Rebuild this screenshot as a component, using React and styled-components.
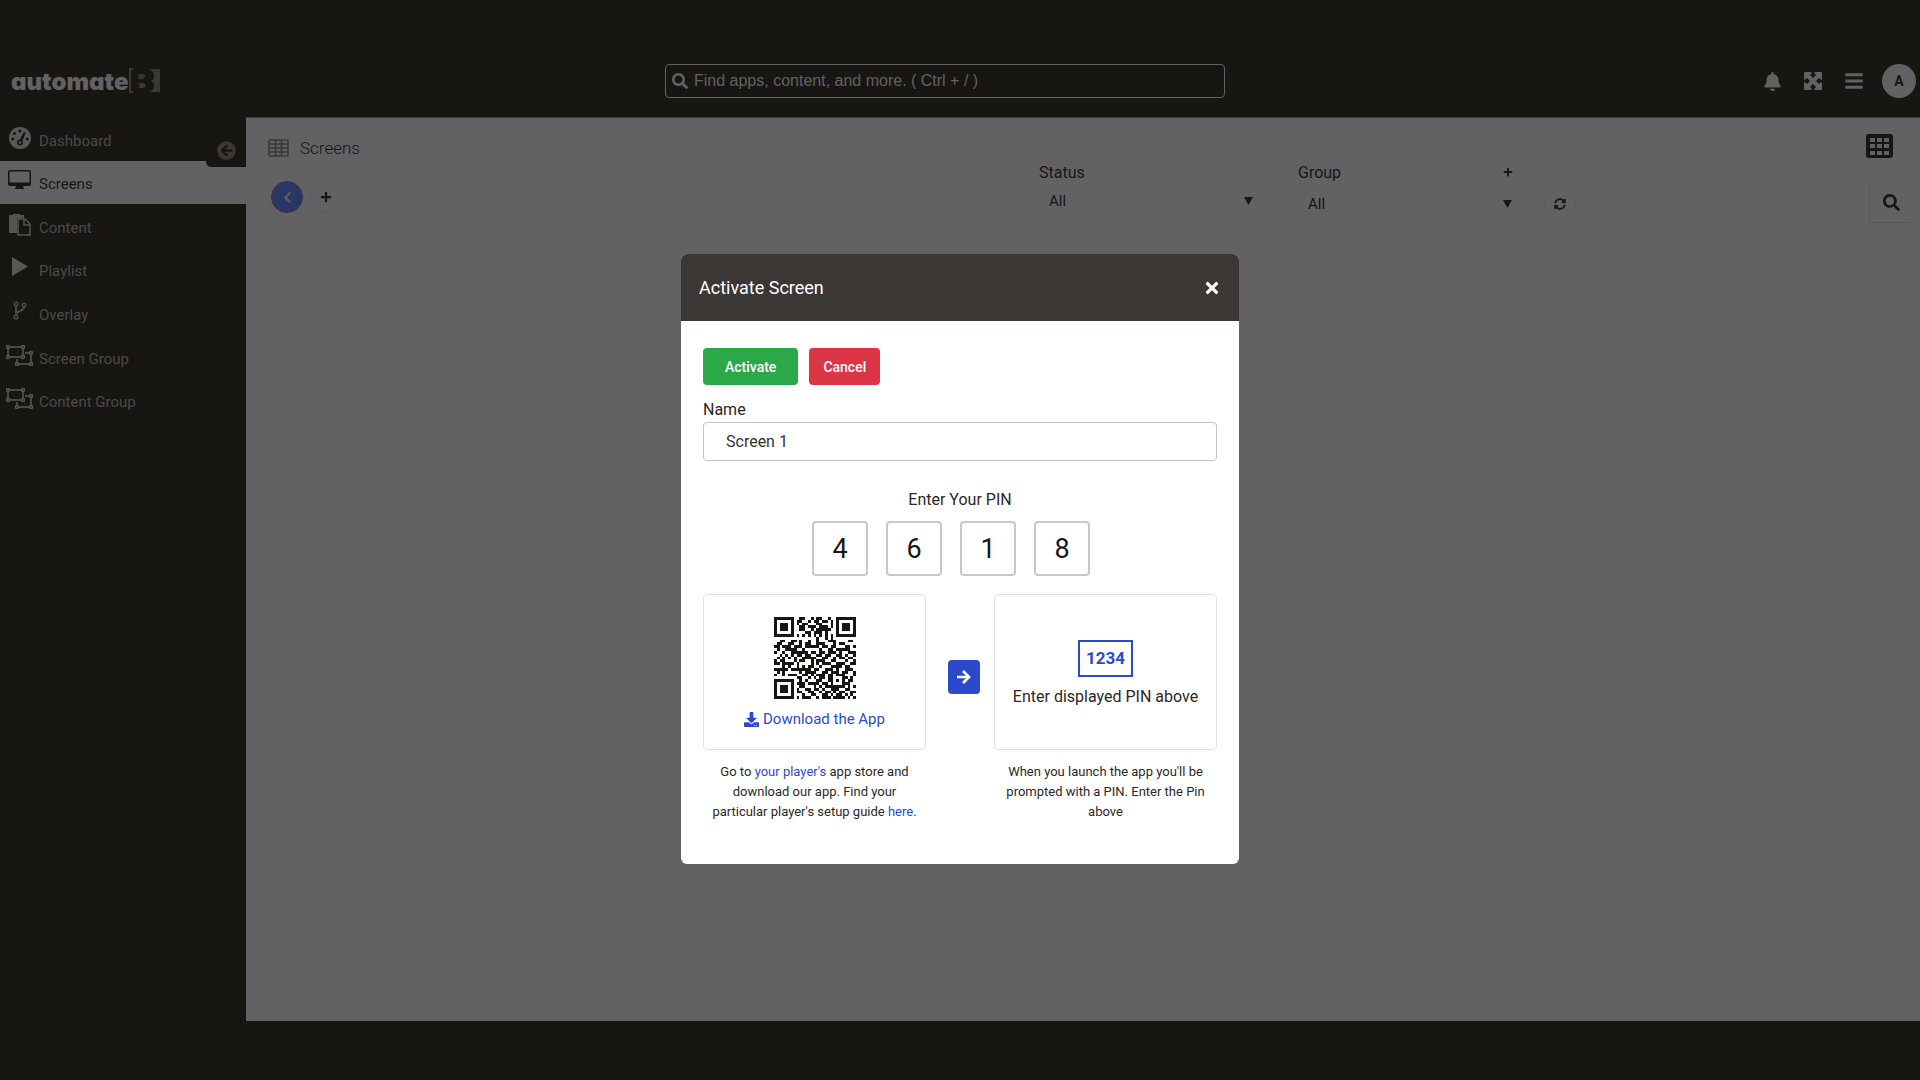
import React, { useState } from 'react';
import styled, { createGlobalStyle } from 'styled-components';
import {
  FaArrowCircleLeft, FaBars, FaBell, FaChevronLeft, FaDownload,
  FaPlus, FaSearch, FaSyncAlt, FaTimes,
} from 'react-icons/fa';

const dark = '#181613';
const grey = '#626163';
const brown = '#3b3734';
const muted = '#4b4948';
const blue = '#2b4acb';

const GlobalStyle = createGlobalStyle`
  * {
    box-sizing: border-box;
  }

  body {
    margin: 0;
    background: ${dark};
    color: ${dark};
    font-family: Roboto, "Liberation Sans", sans-serif;
    font-size: 16px;
  }

  button, input, select {
    font-family: inherit;
  }
`;

const Page = styled.div`
  min-height: 100vh;
  display: grid;
  grid-template-rows: auto 1fr;
  padding-bottom: 59px;
`;

const Header = styled.header`
  height: 117px;
  padding: 45px 4px 0 11px;
  display: grid;
  grid-template-columns: 654fr 560fr 691fr;
  align-items: center;
`;

const Logo = styled.a`
  display: flex;
  align-items: center;
  color: ${grey};
  font-family: Inter, Lato, sans-serif;
  font-feature-settings: "cv11";
  font-size: 24px;
  font-weight: 900;
  text-decoration: none;
`;

const SearchBar = styled.label`
  height: 34px;
  padding: 0 6px;
  display: flex;
  align-items: center;
  gap: 6px;
  border: 1px solid ${grey};
  border-radius: 4px;
  color: ${grey};
`;

const SearchInput = styled.input`
  flex: 1;
  padding: 0;
  border: 0;
  outline: 0;
  background: transparent;
  color: ${grey};
  font-family: "Liberation Sans", Arial, sans-serif;
  font-size: 16px;

  &::placeholder {
    color: ${grey};
    opacity: 1;
  }
`;

const HeaderTools = styled.div`
  display: flex;
  justify-content: flex-end;
  align-items: center;
  gap: 22px;
`;

const IconButton = styled.button`
  padding: 0;
  display: flex;
  align-items: center;
  justify-content: center;
  border: 0;
  background: transparent;
  color: ${(props) => props.$color || dark};
  cursor: pointer;
`;

const Avatar = styled.button`
  width: 34px;
  height: 34px;
  margin-left: -4px;
  padding: 0;
  border: 0;
  border-radius: 50%;
  background: ${grey};
  color: ${dark};
  font-size: 14px;
  font-weight: 700;
`;

const Content = styled.div`
  display: grid;
  grid-template-columns: 246px 1fr;
`;

const Sidebar = styled.aside`
  position: relative;
`;

const Nav = styled.nav`
  height: 305px;
  display: grid;
  grid-auto-rows: 1fr;
`;

const NavItem = styled.a`
  padding: 4px 0 0 6px;
  display: flex;
  align-items: center;
  gap: 6px;
  background: ${(props) => (props.$active ? grey : 'transparent')};
  color: ${(props) => (props.$active ? dark : muted)};
  font-size: 15px;
  text-decoration: none;
`;

const NavIcon = styled.span`
  width: 27px;
  height: 28px;
  display: flex;
  align-items: flex-start;
  justify-content: center;
`;

const CollapseTab = styled.button`
  position: absolute;
  top: 17px;
  right: 0;
  width: 40px;
  height: 33px;
  padding: 0;
  display: flex;
  align-items: center;
  justify-content: center;
  border: 0;
  border-radius: 0 0 0 5px;
  background: ${dark};
  color: ${brown};
`;

const Main = styled.main`
  padding: 0 8px 0 22px;
  display: grid;
  grid-template-columns: 771fr 259fr 246fr 32fr 336fr;
  align-items: start;
  border-top: 1px solid ${brown};
  background: ${grey};
`;

const TitleBlock = styled.div`
  padding-top: 16px;
`;

const Title = styled.h1`
  height: 28px;
  margin: 0 0 19px;
  display: flex;
  align-items: center;
  gap: 11px;
  font-size: 17px;
  font-weight: 300;
`;

const Actions = styled.div`
  padding-left: 3px;
  display: flex;
  gap: 7px;
`;

const RoundButton = styled(IconButton)`
  width: 32px;
  height: 32px;
  border: 1px ${(props) => (props.$filled ? 'solid' : 'dotted')} ${(props) => (props.$filled ? brown : '#5a595a')};
  border-radius: 50%;
  background: ${(props) => (props.$filled ? '#2b3566' : 'transparent')};
`;

const Filter = styled.div`
  padding-top: 42px;
  display: flex;
  flex-direction: column;
  gap: ${(props) => props.$gap};
`;

const FilterHead = styled.div`
  height: 24px;
  padding-right: 31px;
  display: flex;
  align-items: center;
  justify-content: space-between;
`;

const SelectRow = styled.div`
  height: 24px;
  padding: 0 ${(props) => props.$right} 0 10px;
  display: flex;
  align-items: center;
`;

const Select = styled.select`
  flex: 1;
  padding: 0;
  appearance: none;
  border: 0;
  outline: 0;
  background: transparent;
  color: ${dark};
  font-size: 15px;
`;

const Refresh = styled.div`
  padding-top: 70px;
`;

const ViewTools = styled.div`
  padding-top: 16px;
  display: flex;
  flex-direction: column;
  align-items: flex-end;
  gap: 24px;
`;

const GridButton = styled(IconButton)`
  margin-right: 19px;
`;

const FindButton = styled(IconButton)`
  width: 43px;
  height: 41px;
  border: 1px dotted #4f4d4d;
  border-width: 0 0 1px 1px;
  border-radius: 4px;
`;

const Overlay = styled.div`
  position: fixed;
  inset: 0;
  padding-top: 254px;
  display: flex;
  justify-content: center;
  align-items: flex-start;
`;

const Modal = styled.section`
  width: 558px;
  border-radius: 6px;
  overflow: hidden;
  background: #fff;
`;

const ModalHeader = styled.header`
  height: 67px;
  padding: 0 18px;
  display: flex;
  align-items: center;
  justify-content: space-between;
  background: ${brown};
  color: #fff;
`;

const ModalTitle = styled.h2`
  margin: 0;
  font-size: 18px;
  font-weight: 400;
`;

const ModalBody = styled.form`
  padding: 27px 22px 42px;
`;

const ButtonRow = styled.div`
  display: flex;
  gap: 11px;
`;

const Button = styled.button`
  height: 37px;
  padding: 0 ${(props) => props.$pad};
  border: 0;
  border-radius: 4px;
  background: ${(props) => props.$color};
  color: #fff;
  font-size: 14px;
  font-weight: 500;
`;

const Label = styled.label`
  margin-top: 13px;
  display: block;
  color: #2b2825;
  font-size: 16px;
  line-height: 24px;
`;

const NameInput = styled.input`
  width: 100%;
  height: 39px;
  padding: 0 22px;
  display: block;
  border: 1px solid #c4c4c4;
  border-radius: 4px;
  color: #35322f;
  font-size: 16px;
`;

const Pins = styled.fieldset`
  margin: 26px 0 18px;
  padding: 0;
  border: 0;
`;

const Legend = styled.legend`
  width: 100%;
  padding: 0;
  color: #2b2825;
  font-size: 16px;
  line-height: 26px;
  text-align: center;
`;

const PinRow = styled.div`
  padding: 8px 18px 0 0;
  display: flex;
  justify-content: center;
  gap: 18px;
`;

const PinInput = styled.input`
  width: 56px;
  height: 55px;
  padding: 0;
  border: 2px solid #c8c8c8;
  border-radius: 4px;
  color: ${dark};
  font-size: 27px;
  text-align: center;
`;

const Steps = styled.div`
  display: grid;
  grid-template-columns: 1fr 68px 1fr;
  row-gap: 12px;
`;

const Card = styled.div`
  height: 156px;
  padding-top: 4px;
  display: flex;
  flex-direction: column;
  align-items: center;
  justify-content: center;
  gap: 8px;
  border: 1px solid #e1e1e1;
  border-radius: 4px;
  color: #2b2825;
  line-height: 24px;
`;

const Link = styled.a`
  color: ${blue};
  text-decoration: none;
`;

const DownloadLink = styled(Link)`
  display: flex;
  align-items: center;
  gap: 4px;
  font-size: 15px;
`;

const NextButton = styled.button`
  width: 32px;
  height: 34px;
  margin: 10px 0 0 8px;
  padding: 0;
  display: flex;
  align-items: center;
  justify-content: center;
  align-self: center;
  justify-self: center;
  border: 0;
  border-radius: 4px;
  background: ${blue};
  color: #fff;
`;

const PinSample = styled.div`
  height: 37px;
  padding: 0 6px;
  border: 2px solid ${blue};
  color: ${blue};
  font-size: 17px;
  font-weight: 700;
  line-height: 33px;
`;

const Caption = styled.p`
  margin: 0;
  padding: 0 4px;
  grid-column: ${(props) => props.$column};
  color: #2b2825;
  font-size: 13px;
  line-height: 20px;
  text-align: center;
`;

const qrRows = [
  '11111110011001011001001111111',
  '10000010110010110110101000001',
  '10111010101100011000101011101',
  '10111010011011101110101011101',
  '10111010011001011111001011101',
  '10000010000110111010001000001',
  '11111110101010101010101111111',
  '00000000000000010010100000000',
  '00110011010010010001110000110',
  '01100110010110011100010110000',
  '11011101110111110110110001101',
  '01001111001000001001101111100',
  '10010011111101101101110100111',
  '00101010110110011011001101001',
  '01010101001111100110010110110',
  '10110001011001011100110001001',
  '11011110100001010111001110011',
  '00010100101011001000111101100',
  '11111011111110110011101001110',
  '01010000010111100110111011001',
  '10010111001101011101101110001',
  '00000000110010101101100011010',
  '11111110010100011001101010110',
  '10000010111011110110100011100',
  '10111010011000101011111110101',
  '10111010100110110100111001100',
  '10111010110011001011010110011',
  '10000010001001100110101101010',
  '11111110101110010111011110101',
];

function QrCode() {
  return (
    <svg width="82" height="82" viewBox="0 0 29 29" shapeRendering="crispEdges" role="img" aria-label="App download code">
      {qrRows.map((row, y) => row.split('').map((cell, x) => (
        cell === '1' ? <rect key={`${x}-${y}`} x={x} y={y} width="1" height="1" fill={dark} /> : null
      )))}
    </svg>
  );
}

function LogoMark() {
  return (
    <svg width="32" height="26" viewBox="0 0 32 26" fill={brown}>
      <path d="M1 0h4v2H3v21h2v2H1z" />
      <path d="M10 6h5l3 2-3 2 1 1h-6l1-2zM10 15h6l2 3-3 2h-5l2-2z" />
      <path d="M21 1h11v23H21c3-1 5-3 5-6 0-2-1-4-3-5 2-1 3-3 3-5 0-4-2-6-5-7z" />
    </svg>
  );
}

function GaugeIcon() {
  return (
    <svg width="22" height="22" viewBox="0 0 22 22">
      <circle cx="11" cy="11" r="11" fill="#5a5857" />
      <g fill={dark}>
        <circle cx="11" cy="4" r="1.600" />
        <circle cx="5.500" cy="6.500" r="1.600" />
        <circle cx="3.800" cy="12" r="1.600" />
        <circle cx="18.200" cy="12" r="1.600" />
        <circle cx="11" cy="15.500" r="3" />
        <path d="M15 4.500l1.800 1-4 10-3-1z" />
      </g>
      <circle cx="11" cy="15.500" r="1.300" fill="#5a5857" />
    </svg>
  );
}

function MonitorIcon() {
  return (
    <svg width="23" height="20" viewBox="0 0 23 20" fill="currentColor">
      <path fillRule="evenodd" d="M2 0h19a2 2 0 0 1 2 2v12a2 2 0 0 1-2 2h-6l1 3H7l1-3H2a2 2 0 0 1-2-2V2a2 2 0 0 1 2-2zm-.5 1.500v11h20v-11z" />
    </svg>
  );
}

function PagesIcon() {
  return (
    <svg width="22" height="22" viewBox="0 0 22 22" fill="none" stroke="#565453" strokeWidth="1.500">
      <path d="M0 1h4V0h7v1h4v3H8v15H0z" fill="#565453" stroke="none" />
      <path d="M9 5h7l5 5v11H9zM15 5v6h6" />
    </svg>
  );
}

function PlayIcon() {
  return (
    <svg width="24" height="20" viewBox="0 0 24 20" fill="#5a5857">
      <path d="M4 0l16 9.500L4 19z" />
    </svg>
  );
}

function BranchIcon() {
  return (
    <svg width="14" height="20" viewBox="0 0 14 20" fill="none" stroke="currentColor" strokeWidth="1.500">
      <circle cx="3" cy="3" r="1.800" />
      <circle cx="11" cy="4" r="1.800" />
      <circle cx="3" cy="16" r="1.800" />
      <path d="M3 5v9M11 6c0 5-8 3-8 8" strokeWidth="2" />
    </svg>
  );
}

function GroupIcon() {
  const nodes = [[2, 2], [17, 2], [2, 12], [17, 12], [25, 8], [25, 19], [11, 19]];
  return (
    <svg width="27" height="21" viewBox="0 0 27 21" fill="none" stroke="#5a5857" strokeWidth="1.500">
      <path d="M2 2h15v10H2zM19 8h6v11H11v-5" />
      {nodes.map(([x, y]) => (
        <circle key={`${x}-${y}`} cx={x} cy={y} r="1.500" fill={dark} />
      ))}
    </svg>
  );
}

function TableIcon() {
  return (
    <svg width="21" height="18" viewBox="0 0 21 18" fill="none" stroke={brown} strokeWidth="1.500">
      <rect x="1" y="1" width="19" height="16" rx="1" />
      <path d="M1 5h19M1 9h19M1 13h19M7.500 1v16M13.500 1v16" />
    </svg>
  );
}

function TilesIcon() {
  return (
    <svg width="27" height="24" viewBox="0 0 27 24">
      <rect width="27" height="24" rx="3" fill={dark} />
      {[4, 11, 18].map((x) => [4, 10, 17].map((y) => (
        <rect key={`${x}-${y}`} x={x} y={y} width="5" height="4" fill={grey} />
      )))}
    </svg>
  );
}

function ExpandIcon() {
  return (
    <svg width="18" height="18" viewBox="0 0 18 18" fill="currentColor">
      <path d="M0 1a1 1 0 0 1 1-1h6l1 1-2 2 3 3 3-3-2-2 1-1h6a1 1 0 0 1 1 1v6l-1 1-2-2-3 3 3 3 2-2 1 1v6a1 1 0 0 1-1 1h-6l-1-1 2-2-3-3-3 3 2 2-1 1H1a1 1 0 0 1-1-1v-6l1-1 2 2 3-3-3-3-2 2-1-1z" />
    </svg>
  );
}

function ArrowIcon() {
  return (
    <svg width="14" height="14" viewBox="0 0 14 14" fill="none" stroke="currentColor" strokeWidth="2.600">
      <path d="M0 7h12M6 1l6 6-6 6" />
    </svg>
  );
}

function Caret() {
  return (
    <svg width="9" height="8" viewBox="0 0 9 8" fill={dark}>
      <path d="M0 0h9L4.500 8z" />
    </svg>
  );
}

const navItems = [
  { label: 'Dashboard', icon: <GaugeIcon /> },
  { label: 'Screens', icon: <MonitorIcon />, active: true },
  { label: 'Content', icon: <PagesIcon /> },
  { label: 'Playlist', icon: <PlayIcon /> },
  { label: 'Overlay', icon: <BranchIcon /> },
  { label: 'Screen Group', icon: <GroupIcon /> },
  { label: 'Content Group', icon: <GroupIcon /> },
];

function ActivateModal() {
  const [name, setName] = useState('Screen 1');
  const [pin, setPin] = useState(['4', '6', '1', '8']);
  const changePin = (index, value) => setPin(pin.map((digit, i) => (i === index ? value : digit)));

  return (
    <Overlay>
      <Modal role="dialog" aria-labelledby="modal-title">
        <ModalHeader>
          <ModalTitle id="modal-title">Activate Screen</ModalTitle>
          <IconButton type="button" aria-label="Close" $color="#fff"><FaTimes size={18} /></IconButton>
        </ModalHeader>
        <ModalBody onSubmit={(e) => e.preventDefault()}>
          <ButtonRow>
            <Button type="submit" $color="#2ba848" $pad="22px">Activate</Button>
            <Button type="button" $color="#dc3546" $pad="14px">Cancel</Button>
          </ButtonRow>
          <Label htmlFor="screen-name">Name</Label>
          <NameInput id="screen-name" value={name} onChange={(e) => setName(e.target.value)} />
          <Pins>
            <Legend>Enter Your PIN</Legend>
            <PinRow>
              {pin.map((digit, i) => (
                <PinInput
                  key={i}
                  aria-label={`PIN digit ${i + 1}`}
                  maxLength={1}
                  value={digit}
                  onChange={(e) => changePin(i, e.target.value)}
                />
              ))}
            </PinRow>
          </Pins>
          <Steps>
            <Card>
              <QrCode />
              <DownloadLink href="#download">
                <FaDownload size={15} />
                Download the App
              </DownloadLink>
            </Card>
            <NextButton type="button" aria-label="Next"><ArrowIcon /></NextButton>
            <Card>
              <PinSample>1234</PinSample>
              <span>Enter displayed PIN above</span>
            </Card>
            <Caption $column={1}>
              Go to <Link href="#players">your player&apos;s</Link> app store and download our app.
              {' '}Find your particular player&apos;s setup guide <Link href="#guide">here</Link>.
            </Caption>
            <Caption $column={3}>
              When you launch the app you&apos;ll be prompted with a PIN. Enter the Pin above
            </Caption>
          </Steps>
        </ModalBody>
      </Modal>
    </Overlay>
  );
}

function App() {
  return (
    <>
      <GlobalStyle />
      <Page>
        <Header>
          <Logo href="#home">
            automate
            <LogoMark />
          </Logo>
          <SearchBar>
            <FaSearch size={16} />
            <SearchInput type="text" aria-label="Search" placeholder="Find apps, content, and more. ( Ctrl + / )" />
          </SearchBar>
          <HeaderTools>
            <IconButton aria-label="Notifications" $color={grey}><FaBell size={19} /></IconButton>
            <IconButton aria-label="Full screen" $color={grey}><ExpandIcon /></IconButton>
            <IconButton aria-label="Menu" $color={grey}><FaBars size={20} /></IconButton>
            <Avatar>A</Avatar>
          </HeaderTools>
        </Header>
        <Content>
          <Sidebar>
            <Nav>
              {navItems.map(({ label, icon, active }) => (
                <NavItem key={label} href="#nav" $active={active}>
                  <NavIcon>{icon}</NavIcon>
                  {label}
                </NavItem>
              ))}
            </Nav>
            <CollapseTab aria-label="Collapse menu"><FaArrowCircleLeft size={19} /></CollapseTab>
          </Sidebar>
          <Main>
            <TitleBlock>
              <Title>
                <TableIcon />
                Screens
              </Title>
              <Actions>
                <RoundButton aria-label="Back" $filled $color={grey}><FaChevronLeft size={13} /></RoundButton>
                <RoundButton aria-label="Add screen"><FaPlus size={12} /></RoundButton>
              </Actions>
            </TitleBlock>
            <Filter $gap="5px">
              <FilterHead><label htmlFor="status">Status</label></FilterHead>
              <SelectRow $right="45px">
                <Select id="status"><option>All</option></Select>
                <Caret />
              </SelectRow>
            </Filter>
            <Filter $gap="8px">
              <FilterHead>
                <label htmlFor="group">Group</label>
                <IconButton aria-label="Add group"><FaPlus size={10} /></IconButton>
              </FilterHead>
              <SelectRow $right="32px">
                <Select id="group"><option>All</option></Select>
                <Caret />
              </SelectRow>
            </Filter>
            <Refresh>
              <RoundButton aria-label="Refresh"><FaSyncAlt size={12} /></RoundButton>
            </Refresh>
            <ViewTools>
              <GridButton aria-label="Grid view"><TilesIcon /></GridButton>
              <FindButton aria-label="Find"><FaSearch size={17} /></FindButton>
            </ViewTools>
          </Main>
        </Content>
      </Page>
      <ActivateModal />
    </>
  );
}

export default App;
